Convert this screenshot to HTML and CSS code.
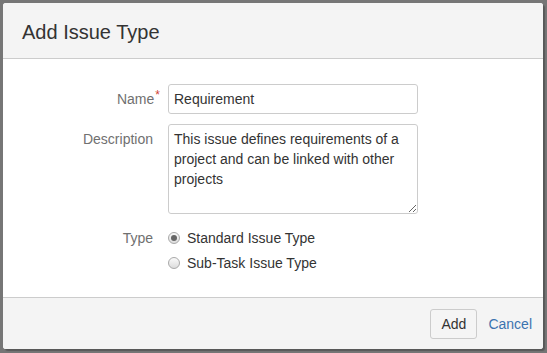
FILE: index.html
```html
<!DOCTYPE html>
<html>
<head>
  <title>Add Issue Type</title>
  <link rel="stylesheet" href="styles.css">
</head>
<body>
  <div class="dialog">
    <div class="dialog-header">
      <h2>Add Issue Type</h2>
    </div>

    <form class="dialog-body">
      <label class="field-label" for="name">Name<span class="required">*</span></label>
      <input class="text-field" type="text" id="name" value="Requirement">

      <label class="field-label label-top" for="description">Description</label>
      <textarea class="text-area" id="description">This issue defines requirements of a project and can be linked with other projects</textarea>

      <span class="field-label label-radio">Type</span>
      <div class="radio-group">
        <label class="radio"><input type="radio" name="type" checked> Standard Issue Type</label>
        <label class="radio"><input type="radio" name="type"> Sub-Task Issue Type</label>
      </div>
    </form>

    <div class="dialog-footer">
      <button class="button">Add</button>
      <a class="cancel" href="#">Cancel</a>
    </div>
  </div>
</body>
</html>
```

FILE: styles.css
```css
body {
  margin: 0;
  padding: 3px;
  background-color: #767676;
  font-family: "Liberation Sans", Arial, sans-serif;
  font-size: 14px;
  color: #333333;
}
.dialog {
  width: 540px;
  height: 346px;
  background-color: #ffffff;
  border-radius: 3px;
  box-shadow: 2px 2px 1px rgba(0, 0, 0, 0.25);
  display: flex;
  flex-direction: column;
  overflow: hidden;
}
.dialog-header {
  background-color: #f4f4f4;
  border-bottom: 1px solid #cccccc;
  height: 55px;
  padding: 0 19px;
  display: flex;
  align-items: center;
}
.dialog-header h2 {
  margin: 0;
  font-size: 20px;
  font-weight: normal;
  color: #333333;
  padding-top: 4px;
}
.dialog-body {
  flex: 1;
  display: grid;
  grid-template-columns: 150px 250px;
  column-gap: 15px;
  row-gap: 10px;
  align-content: start;
  padding-top: 25px;
  margin: 0;
}
.field-label {
  text-align: right;
  color: #707070;
  align-self: center;
}
.label-top {
  align-self: start;
  padding-top: 7px;
}
.label-radio {
  align-self: start;
  padding-top: 6px;
}
.required {
  color: #d04437;
  font-size: 12px;
  vertical-align: top;
  position: relative;
  top: -3px;
  margin-left: 1px;
  margin-right: -7px;
}
.text-field, .text-area {
  box-sizing: border-box;
  width: 250px;
  border: 1px solid #cccccc;
  border-radius: 3px;
  font-family: inherit;
  font-size: 14px;
  color: #333333;
  padding: 4px 5px;
  margin: 0;
}
.text-field {
  height: 30px;
}
.text-area {
  height: 90px;
  resize: vertical;
  line-height: 20px;
}
.radio-group {
  display: flex;
  flex-direction: column;
  gap: 7px;
  padding-top: 5px;
}
.radio {
  display: flex;
  align-items: center;
  gap: 7px;
  color: #333333;
  height: 18px;
}
.radio input {
  appearance: none;
  -webkit-appearance: none;
  width: 12px;
  height: 12px;
  margin: 0;
  border: 1px solid #a9a9a9;
  border-radius: 50%;
  background: linear-gradient(#fafafa, #dcdcdc);
  display: grid;
  place-items: center;
}
.radio input:checked::after {
  content: "";
  width: 6px;
  height: 6px;
  border-radius: 50%;
  background-color: #666666;
}
.dialog-footer {
  background-color: #f4f4f4;
  border-top: 1px solid #cccccc;
  height: 51px;
  display: flex;
  align-items: center;
  justify-content: flex-end;
  padding-right: 11px;
  gap: 11px;
}
.button {
  height: 30px;
  padding: 0 10px;
  border: 1px solid #cccccc;
  border-radius: 3px;
  background-color: #f5f5f5;
  font-family: inherit;
  font-size: 14px;
  color: #333333;
  margin-top: 1px;
}
.cancel {
  color: #3b73af;
  text-decoration: none;
}
```
